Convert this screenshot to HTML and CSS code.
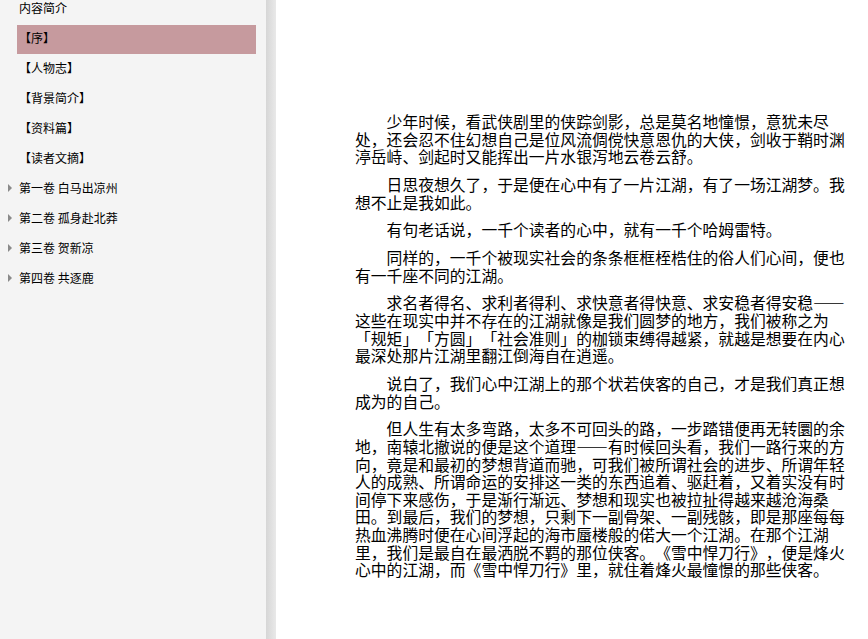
FILE: index.html
```html
<!DOCTYPE html>
<html lang="zh-CN">
<head>
<meta charset="utf-8">
<title>雪中悍刀行</title>
<link rel="stylesheet" href="styles.css">
</head>
<body>
<div class="app">
  <aside class="sidebar">
    <ul class="toc">
      <li class="item">内容简介</li>
      <li class="item child active">【序】</li>
      <li class="item child">【人物志】</li>
      <li class="item child">【背景简介】</li>
      <li class="item child">【资料篇】</li>
      <li class="item child">【读者文摘】</li>
      <li class="item folder"><span class="arrow"></span>第一卷 白马出凉州</li>
      <li class="item folder"><span class="arrow"></span>第二卷 孤身赴北莽</li>
      <li class="item folder"><span class="arrow"></span>第三卷 贺新凉</li>
      <li class="item folder"><span class="arrow"></span>第四卷 共逐鹿</li>
    </ul>
  </aside>
  <div class="gutter"></div>
  <main class="reader">
    <article class="text">
      <p>少年时候，看武侠剧里的侠踪剑影，总是莫名地憧憬，意犹未尽处，还会忍不住幻想自己是位风流倜傥快意恩仇的大侠，剑收于鞘时渊渟岳峙、剑起时又能挥出一片水银泻地云卷云舒。</p>
      <p>日思夜想久了，于是便在心中有了一片江湖，有了一场江湖梦。我想不止是我如此。</p>
      <p>有句老话说，一千个读者的心中，就有一千个哈姆雷特。</p>
      <p>同样的，一千个被现实社会的条条框框桎梏住的俗人们心间，便也有一千座不同的江湖。</p>
      <p>求名者得名、求利者得利、求快意者得快意、求安稳者得安稳——这些在现实中并不存在的江湖就像是我们圆梦的地方，我们被称之为「规矩」「方圆」「社会准则」的枷锁束缚得越紧，就越是想要在内心最深处那片江湖里翻江倒海自在逍遥。</p>
      <p>说白了，我们心中江湖上的那个状若侠客的自己，才是我们真正想成为的自己。</p>
      <p>但人生有太多弯路，太多不可回头的路，一步踏错便再无转圜的余地，南辕北撤说的便是这个道理——有时候回头看，我们一路行来的方向，竟是和最初的梦想背道而驰，可我们被所谓社会的进步、所谓年轻人的成熟、所谓命运的安排这一类的东西追着、驱赶着，又着实没有时间停下来感伤，于是渐行渐远、梦想和现实也被拉扯得越来越沧海桑田。到最后，我们的梦想，只剩下一副骨架、一副残骸，即是那座每每热血沸腾时便在心间浮起的海市蜃楼般的偌大一个江湖。在那个江湖里，我们是最自在最洒脱不羁的那位侠客。《雪中悍刀行》，便是烽火心中的江湖，而《雪中悍刀行》里，就住着烽火最憧憬的那些侠客。</p>
    </article>
  </main>
</div>
</body>
</html>
```

FILE: styles.css
```css
html, body {
  margin: 0;
  padding: 0;
  height: 100%;
  overflow: hidden;
  background: #ffffff;
}

.app {
  display: flex;
  height: 639px;
  font-family: "Noto Sans CJK SC", "Noto Sans", sans-serif;
  color: #000;
  text-spacing-trim: space-all;
}

.sidebar {
  width: 266px;
  flex: none;
  background: #f4f4f4;
  overflow: hidden;
}

.toc {
  list-style: none;
  margin: -6px 0 0 0;
  padding: 0;
}

.item {
  box-sizing: border-box;
  height: 29px;
  line-height: 16px;
  margin: 1px 10px 0 17px;
  padding: 0 0 3px 2px;
  font-size: 12px;
  white-space: nowrap;
  display: flex;
  align-items: center;
  position: relative;
}

.item.active {
  background: #c69a9e;
}

.arrow {
  position: absolute;
  left: -9px;
  top: 9px;
  width: 0;
  height: 0;
  border-left: 4px solid #8a8a8a;
  border-top: 4px solid transparent;
  border-bottom: 4px solid transparent;
}

.gutter {
  width: 10px;
  flex: none;
  background: linear-gradient(to right, #d6d6d6, #e9e9e9);
}

.reader {
  flex: 1;
  background: #ffffff;
  padding: 113px 0 0 79px;
}

.text {
  width: 496px;
  font-size: 15.8px;
  line-height: 17.65px;
  text-spacing-trim: space-all;
}

.text p {
  margin: 0 0 10px 0;
  text-indent: 2em;
}
```
